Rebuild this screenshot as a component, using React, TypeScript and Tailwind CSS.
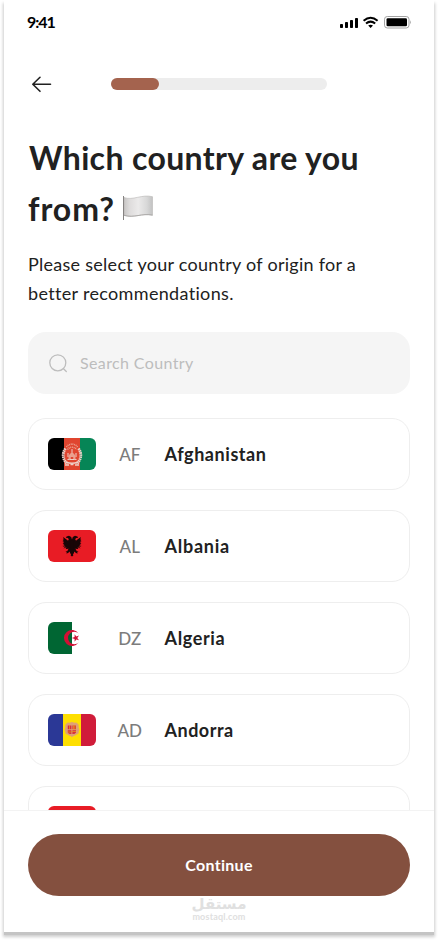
import type { ReactNode } from "react";

type Country = { code?: string; name?: string; flag: ReactNode; tracking?: string };

function AfghanistanFlag() {
  return (
    <svg viewBox="0 0 48 32" className="h-8 w-12">
      <path fill="#000" d="M0 0h16v32H0z" />
      <path fill="#e0452f" d="M16 0h16v32H16z" />
      <path fill="#068556" d="M32 0h16v32H32z" />
      <g fill="none" stroke="#edd0c8">
        <path strokeWidth="2.8" strokeDasharray="1.6 .5" d="M17.500 10.500c-3.500 4.500-3.200 11 2 15.500M30.500 10.500c3.500 4.500 3.200 11-2 15.500" />
        <path stroke="#eba08e" strokeWidth="1.600" strokeDasharray="1 .7" d="M18.500 9c2.400-3.800 8.600-3.800 11 0M19.500 11.500c2-3 7-3 9 0" />
        <path strokeWidth="1" d="M24 11v4M20 15v4M28 15v4M19.500 21.500h9M22 21v-3.500a2 2 0 0 1 4 0V21" />
        <path strokeWidth="1.500" d="M18 24q6 2.500 12 0M17 27h4M22.500 26.500h3M27 27h4" />
      </g>
      <path fill="#eba08e" d="M20.500 18q3.500-6 7 0v3.500h-1.500v-2.500h-4v2.500h-1.500z" />
    </svg>
  );
}

function AlbaniaFlag() {
  // left half of the double-headed eagle, mirrored for the right one
  const half = (
    <>
      <path d="M24 9.500L23.200 7 21 5.800 18.600 6.600 17.800 7.800 20 8 20.800 9.400 19.800 11 24 18z" />
      <path d="M24 10.500l-3 1-2.500-2L15.200 7l.4 2.600-1 .3 1.300 1.300-1.400.5 1.600 1-1.500.7 1.800.8-1.900 1 2.300.1-2.200 1.800 2.900-.9-2 2.300 2.900-1.200-.7 1.800L24 18.500z" />
      <path d="M24 17l-3.300 1.500-1.500 2.700-1.700.3 1.300 1-.3 1.200 1.800-.9 1.600-1.200.1 1.600 1 .8-.3 1.500L24 26.500z" />
    </>
  );
  return (
    <svg viewBox="0 0 48 32" className="h-8 w-12">
      <path fill="#e81c25" d="M0 0h48v32H0z" />
      <g fill="#180506">
        {half}
        <g transform="matrix(-1 0 0 1 48 0)">{half}</g>
        <path d="M22.500 11h3v12h-3z" />
      </g>
    </svg>
  );
}

function AlgeriaFlag() {
  return (
    <svg viewBox="0 0 48 32" className="h-8 w-12">
      <path fill="#fff" d="M0 0h48v32H0z" />
      <path fill="#006633" d="M0 0h24v32H0z" />
      <path fill="#d21034" d="M30.700 11.700A8 8 0 1 0 30.700 20.300A6.200 6.200 0 1 1 30.700 11.700z" />
      <path fill="#d21034" d="M23.800 16l2.800-.9v-2.900l1.700 2.300 2.700-.9-1.700 2.400 1.700 2.300-2.700-.9-1.700 2.400v-2.900z" />
    </svg>
  );
}

function AndorraFlag() {
  return (
    <svg viewBox="0 0 48 32" className="h-8 w-12">
      <path fill="#2b3896" d="M0 0h15v32H0z" />
      <path fill="#fedf00" d="M15 0h18v32H15z" />
      <path fill="#d01c3a" d="M33 0h15v32H33z" />
      <path
        fill="#dfa075"
        d="M24 8c2 0 2 1.300 3.500.6 2 0 1.800 1.500 3 1.900.6 1.500-.2 2.300.4 3.500.6 1.300.6 2.300-.2 3.500.4 1.800-.8 3-2.600 3.200-1 1.200-2.700.9-4.100 2.500-1.400-1.600-3.100-1.300-4.100-2.500-1.800-.2-3-1.400-2.600-3.200-.8-1.200-.8-2.200-.2-3.500.6-1.200-.2-2 .4-3.500 1.200-.4 1-1.900 3-1.900 1.500.7 1.500-.6 3.500-.6z"
      />
      <path fill="#d5283b" d="M19.800 11.500h3.600v3.800h-3.600zM24.400 11.500H28v3.800h-3.600zM19.800 16.200h3.600v3.800q-3 0-3.600-1.500zM24.400 16.200H28v2.300q-.6 1.500-3.600 1.500z" />
      <path stroke="#fedf00" strokeWidth=".5" d="M21.600 11.500v3.800M25.600 11.500v3.800M26.900 11.500v3.800M19.800 18h3.600M24.400 17.600H28" />
    </svg>
  );
}

function RedFlag() {
  return (
    <svg viewBox="0 0 48 32" className="h-8 w-12">
      <path fill="#e81c25" d="M0 0h48v32H0z" />
    </svg>
  );
}

const countries: Country[] = [
  { code: "AF", name: "Afghanistan", flag: <AfghanistanFlag />, tracking: "tracking-[0.55px]" },
  { code: "AL", name: "Albania", flag: <AlbaniaFlag />, tracking: "tracking-[0.75px]" },
  { code: "DZ", name: "Algeria", flag: <AlgeriaFlag />, tracking: "tracking-[0.65px]" },
  { code: "AD", name: "Andorra", flag: <AndorraFlag />, tracking: "tracking-[0.5px]" },
  { flag: <RedFlag /> },
];

function StatusBar() {
  return (
    <div className="flex h-11 shrink-0 items-center justify-between pr-[23px] pl-[23px]">
      <span className="-mt-px text-base font-bold tracking-[-1.1px] text-black">9:41</span>
      <svg width="72" height="14" viewBox="0 0 72 14" fill="#000">
        <rect x="1" y="9" width="3" height="4" rx=".8" />
        <rect x="6" y="7" width="3" height="6" rx=".8" />
        <rect x="11" y="5" width="3" height="8" rx=".8" />
        <rect x="16" y="3" width="3" height="10" rx=".8" />
        <g fill="none" stroke="#000" strokeWidth="2">
          <path d="M24.600 5.700q7-5.800 14 0" />
          <path d="M27 8.500q4.600-3.800 9.200 0" />
        </g>
        <path d="M29.200 10.600q2.400-1.900 4.800 0l-2.400 2.400z" />
        <rect x="45.500" y="1.500" width="24.500" height="11.500" rx="2.800" fill="none" stroke="#a3a3a3" />
        <rect x="47.500" y="3.300" width="20.500" height="8" rx="1.300" />
        <path fill="#a3a3a3" d="M71 5.300q1.500 2 0 4z" />
      </svg>
    </div>
  );
}

function WhiteFlag() {
  return (
    <svg width="32" height="26" viewBox="0 0 32 26" className="-mt-0.5 ml-[7px]">
      <defs>
        <linearGradient id="cloth" x1="0" x2="1">
          <stop offset="0" stopColor="#c8c6c5" />
          <stop offset=".2" stopColor="#dedcdc" />
          <stop offset=".5" stopColor="#ebeaea" />
          <stop offset=".8" stopColor="#d8d8d8" />
          <stop offset="1" stopColor="#c2c2c2" />
        </linearGradient>
      </defs>
      <path fill="url(#cloth)" stroke="#b9b7b6" strokeWidth=".6" d="M2 2.500c9 3.300 18-3.500 28.500-.8v18.500C20 17.800 12 23.500 2 20.300z" />
      <path stroke="#9b9897" strokeWidth=".7" d="M2 20.300c10 3.200 18-2.500 28.500-.1" fill="none" />
      <path stroke="#868382" d="M1.500 1v24" />
    </svg>
  );
}

function CountryRow({ country }: { country: Country }) {
  return (
    <li className="flex h-[72px] shrink-0 items-center rounded-[18px] border border-[#eeeeee] pl-[19px]">
      <div className="h-8 w-12 overflow-hidden rounded-md">{country.flag}</div>
      {country.name && (
        <>
          <span className="w-[68.5px] pt-0.5 pr-px text-center text-[17px] font-medium text-[#7c7c7c]">{country.code}</span>
          <span className={`text-lg font-bold text-[#212121] ${country.tracking}`}>{country.name}</span>
        </>
      )}
    </li>
  );
}

export default function App() {
  return (
    <div className="h-[940px] w-[438px] overflow-hidden bg-white px-1 font-[Lato,sans-serif]">
      <main className="flex h-[932px] flex-col bg-white shadow-[0_3px_0_0_#c4c4c4,0_4px_3px_1px_rgba(0,0,0,0.2)]">
        <StatusBar />

        <header className="flex h-20 shrink-0 items-center pl-[27px]">
          <svg width="22" height="20" viewBox="0 0 22 20" fill="none" stroke="#212121" strokeWidth="1.600" strokeLinecap="round" strokeLinejoin="round">
            <path d="M19.500 10.300H2M9 3.300l-7.200 7L9 17.300" />
          </svg>
          <div className="ml-[58px] h-3 w-[216px] rounded-full bg-[#ededed]">
            <div className="h-3 w-12 rounded-full bg-[#a4634e]" />
          </div>
        </header>

        <section className="flex min-h-0 flex-1 flex-col px-6">
          <h1 className="mt-2 text-[32px] leading-[51px] font-bold text-[#212121]">
            <span className="block pl-px tracking-[0.35px] whitespace-nowrap">Which country are you</span>
            <span className="flex items-center tracking-[0.95px]">
              from? <WhiteFlag />
            </span>
          </h1>
          <p className="mt-4 text-lg leading-[29px] tracking-[0.27px] whitespace-nowrap text-[#212121]">
            Please select your country of origin for a
            <br />
            <span className="tracking-[0.33px]">better recommendations.</span>
          </p>

          <div className="mt-6 flex h-[62px] shrink-0 items-center gap-3 rounded-[18px] bg-[#f5f5f5] pl-5">
            <svg width="20" height="20" viewBox="0 0 20 20" fill="none" stroke="#bdbdbd" strokeWidth="1.300" strokeLinecap="round">
              <circle cx="9.800" cy="9.800" r="8" />
              <path d="M15.500 15.800l2.800 2.700" />
            </svg>
            <span className="text-base tracking-[0.38px] text-[#bdbdbd]">Search Country</span>
          </div>

          <ul className="mt-6 flex min-h-0 flex-1 flex-col gap-5 overflow-hidden">
            {countries.map((c, i) => (
              <CountryRow key={i} country={c} />
            ))}
          </ul>
        </section>

        <footer className="flex h-[122px] shrink-0 flex-col border-t border-[#f3f3f3] px-6 pt-[23px]">
          <button className="h-[62px] shrink-0 rounded-full bg-[#84503f] text-base font-bold tracking-[0.3px] text-white">Continue</button>
          <div className="flex flex-col items-center text-[#e0e0e0]">
            <span dir="rtl" className="h-4 font-['DejaVu_Sans',sans-serif] text-[15px] leading-4 font-bold">مستقل</span>
            <span className="text-[9px] leading-[9px] font-bold tracking-[0.2px]">mostaql.com</span>
          </div>
        </footer>
      </main>
    </div>
  );
}
